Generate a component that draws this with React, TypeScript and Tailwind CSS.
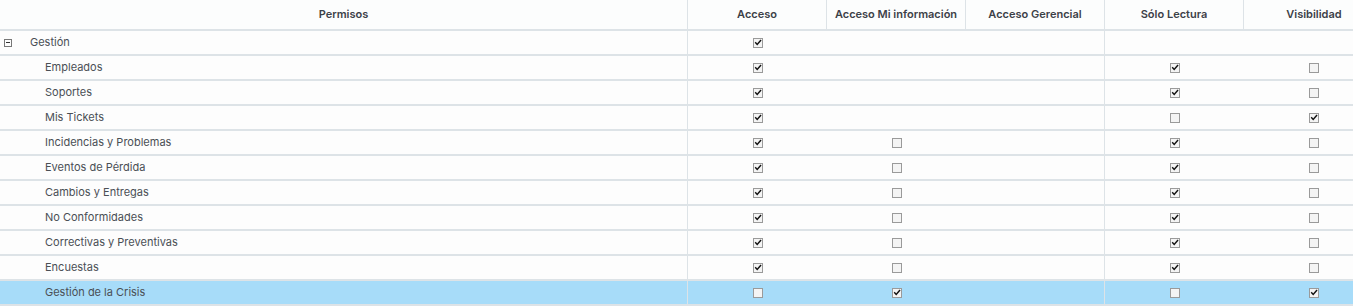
import React from "react";

type Cell = boolean | null;

const rows: { name: string; level: number; cells: Cell[]; selected?: boolean }[] = [
  { name: "Gestión", level: 0, cells: [true, null, null, null, null] },
  { name: "Empleados", level: 1, cells: [true, null, null, true, false] },
  { name: "Soportes", level: 1, cells: [true, null, null, true, false] },
  { name: "Mis Tickets", level: 1, cells: [true, null, null, false, true] },
  { name: "Incidencias y Problemas", level: 1, cells: [true, false, null, true, false] },
  { name: "Eventos de Pérdida", level: 1, cells: [true, false, null, true, false] },
  { name: "Cambios y Entregas", level: 1, cells: [true, false, null, true, false] },
  { name: "No Conformidades", level: 1, cells: [true, false, null, true, false] },
  { name: "Correctivas y Preventivas", level: 1, cells: [true, false, null, true, false] },
  { name: "Encuestas", level: 1, cells: [true, false, null, true, false] },
  { name: "Gestión de la Crisis", level: 1, cells: [false, true, null, false, true], selected: true },
];

const headers = ["Acceso", "Acceso Mi información", "Acceso Gerencial", "Sólo Lectura", "Visibilidad"];

const Check = ({ checked }: { checked: boolean }) => (
  <span className="inline-flex size-[10px] items-center justify-center border border-[#9a9a9a] bg-[#f4f4f4]">
    {checked && (
      <svg viewBox="0 0 10 10" className="size-[9px]">
        <path d="M1.5 4.8 L4 7.5 L8.8 1.8" fill="none" stroke="#111" strokeWidth="1.8" />
      </svg>
    )}
  </span>
);

const App = () => {
  return (
    <div className="w-[1357px] h-[307px] overflow-hidden bg-white" style={{ fontFamily: "Inter, 'Noto Sans', sans-serif" }}>
      <div className="w-[1353px] overflow-hidden">
        <div className="w-[1385px]">
          {/* header */}
          <div className="flex h-[31px] border-b-2 border-[#dde3e7] bg-[#fcfdfd] text-[11px] font-semibold text-[#3c4148]">
            <div className="w-[688px] flex items-center justify-center border-r border-[#dde3e7]">Permisos</div>
            {headers.map((h, i) => (
              <div
                key={h}
                className={
                  i < 4
                    ? "w-[139px] flex items-center justify-center border-r border-[#dde3e7]"
                    : "w-[140px] flex items-center justify-center"
                }
              >
                {h}
              </div>
            ))}
          </div>

          {/* body */}
          {rows.map((r) => (
            <div
              key={r.name}
              className={
                "flex h-[25px] border-b-2 border-[#dde3e7] text-[11px] text-[#4a4f55] " +
                (r.selected ? "bg-[#a7dcf9] text-[#2f4a5c]" : "bg-[#fdfdfd]")
              }
            >
              <div className="w-[688px] flex items-center border-r border-[#dde3e7]">
                {r.level === 0 ? (
                  <>
                    <span className="ml-[4px] inline-flex size-[8px] items-center justify-center border border-[#777]">
                      <span className="block h-px w-[4px] bg-[#333]" />
                    </span>
                    <span className="ml-[18px]">{r.name}</span>
                  </>
                ) : (
                  <span className="ml-[45px]">{r.name}</span>
                )}
              </div>
              <div className="w-[139px] flex items-center justify-center">
                {r.cells[0] !== null && <Check checked={r.cells[0]} />}
              </div>
              <div className="w-[139px] flex items-center justify-center">
                {r.cells[1] !== null && <Check checked={r.cells[1]} />}
              </div>
              <div className="w-[139px] flex items-center justify-center border-r border-[#dde3e7]">
                {r.cells[2] !== null && <Check checked={r.cells[2]} />}
              </div>
              <div className="w-[139px] flex items-center justify-center">
                {r.cells[3] !== null && <Check checked={r.cells[3]} />}
              </div>
              <div className="w-[140px] flex items-center justify-center">
                {r.cells[4] !== null && <Check checked={r.cells[4]} />}
              </div>
            </div>
          ))}
        </div>
      </div>
    </div>
  );
};

export default App;
